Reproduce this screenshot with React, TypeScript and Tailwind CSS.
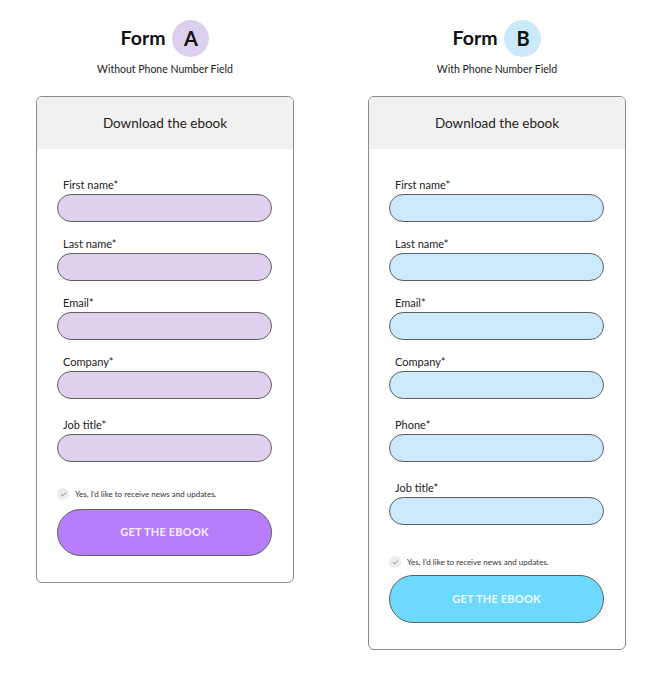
import { Check } from 'lucide-react'

type Theme = 'purple' | 'blue'

const INPUT_BG: Record<Theme, string> = {
  purple: 'bg-[#dfd1ee]',
  blue: 'bg-[#cdeafd]',
}

const BUTTON_BG: Record<Theme, string> = {
  purple: 'bg-[#b77dfb] text-[#f6eeff] h-[47px]',
  blue: 'bg-[#6dd9fd] text-[#eefaff] h-[48px]',
}

const BADGE_BG: Record<Theme, string> = {
  purple: 'bg-[#ddd0ee]',
  blue: 'bg-[#cce9fb]',
}

interface Field {
  label: string
  extra?: string
}

interface FormProps {
  letter: string
  subtitle: string
  theme: Theme
  fields: Field[]
  consentGap: string
  buttonGap: string
}

function EbookForm({ letter, subtitle, theme, fields, consentGap, buttonGap }: FormProps) {
  return (
    <div className="flex flex-col items-center w-[258px]">
      <div className="flex items-center gap-[7px] h-[38px] mt-[19px]">
        <span className="text-[19.5px] font-bold text-[#111]">Form</span>
        <span
          className={`w-[37px] h-[37px] rounded-full flex items-center justify-center text-[20px] font-bold text-[#111] ${BADGE_BG[theme]}`}
        >
          {letter}
        </span>
      </div>
      <p className="text-[10.5px] text-[#222] mt-[5px] leading-[14px]">{subtitle}</p>

      <div className="mt-[20px] w-full border border-[#8a8a8a] rounded-[6px] overflow-hidden bg-white">
        <div className="h-[52px] bg-[#f1f1f1] flex items-center justify-center text-[13.5px] text-[#222] pt-[1px]">
          Download the ebook
        </div>

        <div className="pl-[20px] pr-[21px] pt-[29px]">
          {fields.map((f, i) => (
            <div key={f.label} className={`${i > 0 ? 'mt-[15px]' : ''} ${f.extra ?? ''}`}>
              <div className="text-[11px] leading-[14px] text-[#222] pl-[6px]">{f.label}</div>
              <div className={`mt-[2px] h-[28px] rounded-full border border-[#5f5f5f] ${INPUT_BG[theme]}`} />
            </div>
          ))}

          <div className={`flex items-center gap-[6px] ${consentGap}`}>
            <span className="w-[12px] h-[12px] rounded-full bg-[#ececec] flex items-center justify-center">
              <Check size={7} strokeWidth={3} className="text-[#777]" />
            </span>
            <span className="text-[8px] text-[#333] leading-[10px]">Yes, I’d like to receive news and updates.</span>
          </div>

          <div
            className={`${buttonGap} rounded-full border border-[#5f5f5f] flex items-center justify-center text-[11px] font-bold tracking-[0.2px] ${BUTTON_BG[theme]}`}
          >
            GET THE EBOOK
          </div>
          <div className="h-[26px]" />
        </div>
      </div>
    </div>
  )
}

export default function App() {
  return (
    <div className="w-[651px] h-[673px] bg-white flex gap-[74px] pl-[36px] font-['Lato',sans-serif]">
      <EbookForm
        letter="A"
        subtitle="Without Phone Number Field"
        theme="purple"
        fields={[
          { label: 'First name*' },
          { label: 'Last name*' },
          { label: 'Email*' },
          { label: 'Company*' },
          { label: 'Job title*', extra: 'pt-[4px]' },
        ]}
        consentGap="mt-[26px]"
        buttonGap="mt-[9px]"
      />
      <EbookForm
        letter="B"
        subtitle="With Phone Number Field"
        theme="blue"
        fields={[
          { label: 'First name*' },
          { label: 'Last name*' },
          { label: 'Email*' },
          { label: 'Company*' },
          { label: 'Phone*', extra: 'pt-[4px]' },
          { label: 'Job title*', extra: 'pt-[4px]' },
        ]}
        consentGap="mt-[31px]"
        buttonGap="mt-[7px]"
      />
    </div>
  )
}
